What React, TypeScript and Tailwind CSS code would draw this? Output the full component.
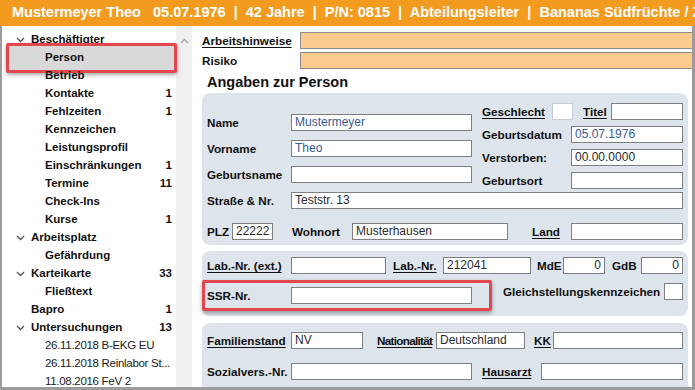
import React from 'react';

type TreeRow = {
  label: string;
  lvl: 0 | 1;
  chev?: boolean;
  count?: string;
  plain?: boolean;
  selected?: boolean;
};

const tree: TreeRow[] = [
  { label: 'Beschäftigter', lvl: 0, chev: true },
  { label: 'Person', lvl: 1, selected: true },
  { label: 'Betrieb', lvl: 1 },
  { label: 'Kontakte', lvl: 1, count: '1' },
  { label: 'Fehlzeiten', lvl: 1, count: '1' },
  { label: 'Kennzeichen', lvl: 1 },
  { label: 'Leistungsprofil', lvl: 1 },
  { label: 'Einschränkungen', lvl: 1, count: '1' },
  { label: 'Termine', lvl: 1, count: '11' },
  { label: 'Check-Ins', lvl: 1 },
  { label: 'Kurse', lvl: 1, count: '1' },
  { label: 'Arbeitsplatz', lvl: 0, chev: true },
  { label: 'Gefährdung', lvl: 1 },
  { label: 'Karteikarte', lvl: 0, chev: true, count: '33' },
  { label: 'Fließtext', lvl: 1 },
  { label: 'Bapro', lvl: 0, count: '1' },
  { label: 'Untersuchungen', lvl: 0, chev: true, count: '13' },
  { label: '26.11.2018 B-EKG EU', lvl: 1, plain: true },
  { label: '26.11.2018 Reinlabor St...', lvl: 1, plain: true },
  { label: '11.08.2016 FeV 2', lvl: 1, plain: true },
];

const ChevronDown = () => (
  <svg width="9" height="6" viewBox="0 0 9 6">
    <path d="M1 1l3.5 3.5L8 1" fill="none" stroke="#555" strokeWidth="1.3" />
  </svg>
);

const Label: React.FC<{ text: string; u?: boolean; className?: string }> = ({ text, u, className }) => (
  <span
    className={`shrink-0 whitespace-nowrap text-[11.7px] font-bold leading-[17px] text-[#111] ${
      u ? 'underline underline-offset-[2px]' : ''
    } ${className ?? ''}`}
  >
    {text}
  </span>
);

const Field: React.FC<{ value?: string; className?: string; blue?: boolean; right?: boolean }> = ({
  value,
  className,
  blue,
  right,
}) => (
  <div
    className={`h-[17px] shrink-0 overflow-hidden whitespace-nowrap border border-[#7f7f7f] bg-white px-[3px] text-[12px] leading-[15px] ${
      blue ? 'text-[#3a5a98]' : 'text-[#2a2a2a]'
    } ${right ? 'text-right' : ''} ${className ?? ''}`}
  >
    {value}
  </div>
);

const Sidebar = () => (
  <div className="w-[174px] shrink-0 bg-white pt-[5px]">
    {tree.map((r) => (
      <div key={r.label} className="relative flex h-[18px] items-center pr-[4px]">
        {r.selected && (
          <div className="absolute -top-[6px] -bottom-[6px] left-[4px] -right-[1px] rounded-[2px] border-[3px] border-[#e2474d] bg-[#d9d9d9] shadow-[0_2px_4px_rgba(0,0,0,0.35)]" />
        )}
        {r.lvl === 0 ? (
          <div className="flex w-[29px] shrink-0 items-center pl-[14px]">{r.chev && <ChevronDown />}</div>
        ) : (
          <div className="w-[43px] shrink-0" />
        )}
        <span
          className={`relative whitespace-nowrap text-[#111] ${
            r.plain ? 'text-[11.5px] tracking-[-0.3px] text-[#222]' : 'text-[11.5px] font-bold'
          }`}
        >
          {r.label}
        </span>
        {r.count && <span className="relative ml-auto text-[11.5px] font-bold text-[#111]">{r.count}</span>}
      </div>
    ))}
  </div>
);

const Main = () => (
  <div className="flex min-w-0 flex-1 flex-col overflow-hidden bg-white">
    <div className="mt-[6px] flex h-[18px] items-center">
      <Label text="Arbeitshinweise" u className="w-[108px] pl-[10px]" />
      <div className="h-full flex-1 border border-r-0 border-[#8c8c8c] bg-[#fbca8c]" />
    </div>
    <div className="mt-[3px] flex h-[18px] items-center">
      <Label text="Risiko" className="w-[108px] pl-[10px]" />
      <div className="h-full flex-1 border border-r-0 border-[#8c8c8c] bg-[#fbca8c]" />
    </div>
    <div className="mt-[3px] h-[20px] shrink-0 pl-[15px] text-[14.5px] font-bold leading-[20px] text-[#111]">
      Angaben zur Person
    </div>

    {/* Person */}
    <div className="ml-[10px] mr-[4px] mt-[1px] h-[152px] shrink-0 rounded-[8px] bg-[#dde4ec] px-[5px]">
      <div className="flex">
        <div className="flex w-[265px] shrink-0 flex-col gap-[9px] pt-[21px]">
          <div className="flex items-center">
            <Label text="Name" className="w-[84px]" />
            <Field value="Mustermeyer" blue className="w-[181px]" />
          </div>
          <div className="flex items-center">
            <Label text="Vorname" className="w-[84px]" />
            <Field value="Theo" blue className="w-[181px]" />
          </div>
          <div className="flex items-center">
            <Label text="Geburtsname" className="w-[84px]" />
            <Field className="w-[181px]" />
          </div>
        </div>
        <div className="ml-[10px] flex flex-1 flex-col gap-[6px] pt-[10px]">
          <div className="flex items-center">
            <Label text="Geschlecht" u className="w-[70px]" />
            <Field className="w-[21px] border-[#c4ccd6]" />
            <Label text="Titel" u className="ml-[10px] w-[28px]" />
            <Field className="flex-1" />
          </div>
          <div className="flex items-center">
            <Label text="Geburtsdatum" className="w-[89px]" />
            <Field value="05.07.1976" blue className="flex-1" />
          </div>
          <div className="flex items-center">
            <Label text="Verstorben:" className="w-[89px]" />
            <Field value="00.00.0000" className="flex-1" />
          </div>
          <div className="flex items-center">
            <Label text="Geburtsort" className="w-[89px]" />
            <Field className="flex-1" />
          </div>
        </div>
      </div>
      <div className="mt-[3px] flex items-center">
        <Label text="Straße & Nr." className="w-[84px]" />
        <Field value="Teststr. 13" className="flex-1" />
      </div>
      <div className="mt-[14px] flex items-center">
        <Label text="PLZ" className="w-[25px]" />
        <Field value="22222" className="w-[41px] px-[1px]" />
        <Label text="Wohnort" className="ml-[19px] w-[60px]" />
        <Field value="Musterhausen" className="w-[156px]" />
        <Label text="Land" u className="ml-[24px] w-[39px]" />
        <Field className="flex-1" />
      </div>
    </div>

    {/* Labor */}
    <div className="ml-[10px] mr-[4px] mt-[6px] h-[65px] shrink-0 rounded-[8px] bg-[#dde4ec] px-[5px] pt-[6px]">
      <div className="flex items-center">
        <Label text="Lab.-Nr. (ext.)" u className="w-[84px]" />
        <Field className="w-[95px]" />
        <Label text="Lab.-Nr." u className="ml-[7px] w-[50px]" />
        <Field value="212041" className="w-[88px]" />
        <Label text="MdE" className="ml-[6px] w-[26px]" />
        <Field value="0" right className="w-[42px]" />
        <Label text="GdB" className="ml-[7px] w-[29px]" />
        <Field value="0" right className="flex-1" />
      </div>
      <div className="mt-[9px] flex items-start">
        <div className="relative mt-[4px] flex w-[265px] shrink-0 items-center">
          <div className="absolute -top-[7px] -bottom-[7px] -left-[5px] -right-[20px] rounded-[2px] border-[3px] border-[#e2474d] shadow-[0_2px_4px_rgba(0,0,0,0.35)]" />
          <Label text="SSR-Nr." className="w-[84px]" />
          <Field className="w-[181px]" />
        </div>
        <div className="ml-[31px] flex flex-1 items-start">
          <Label text="Gleichstellungskennzeichen" className="leading-[14px]" />
          <Field className="ml-auto h-[15px] w-[19px]" />
        </div>
      </div>
    </div>

    {/* Familie */}
    <div className="ml-[10px] mr-[4px] mt-[7px] h-[80px] shrink-0 rounded-[8px] bg-[#dde4ec] px-[5px] pt-[9px]">
      <div className="flex items-center">
        <Label text="Familienstand" u className="w-[84px]" />
        <Field value="NV" className="w-[72px]" />
        <Label text="Nationalität" u className="ml-[14px] w-[59px] tracking-[-0.7px]" />
        <Field value="Deutschland" className="w-[89px]" />
        <Label text="KK" u className="ml-[9px] w-[19px]" />
        <Field className="flex-1" />
      </div>
      <div className="mt-[14px] flex items-center">
        <Label text="Sozialvers.-Nr." className="w-[84px]" />
        <Field className="w-[181px]" />
        <Label text="Hausarzt" u className="ml-[10px] w-[59px]" />
        <Field className="flex-1" />
      </div>
    </div>
  </div>
);

export default function App() {
  return (
    <div className="flex h-[390px] w-[695px] flex-col overflow-hidden bg-white font-['Liberation_Sans',Arial,sans-serif]">
      <div className="flex h-[26px] shrink-0 items-center overflow-hidden whitespace-pre bg-[#f39b1f] pl-[12px] text-[14.5px] font-bold text-white">
        {'Mustermeyer Theo   05.07.1976  |  42 Jahre  |  P/N: 0815  |  Abteilungsleiter  |  Bananas Südfrüchte / Zitrusfrüchte'}
      </div>
      <div className="flex min-h-0 flex-1 border-b-[3px] border-l-[2px] border-r-[3px] border-[#9c9c9c]">
        <Sidebar />
        <div className="flex w-[16px] shrink-0 justify-center bg-[#f0f0f0] pt-[12px]">
          <svg width="9" height="6" viewBox="0 0 9 6">
            <path d="M1 5l3.5-3.5L8 5" fill="none" stroke="#a6a6a6" strokeWidth="1.3" />
          </svg>
        </div>
        <Main />
      </div>
    </div>
  );
}
